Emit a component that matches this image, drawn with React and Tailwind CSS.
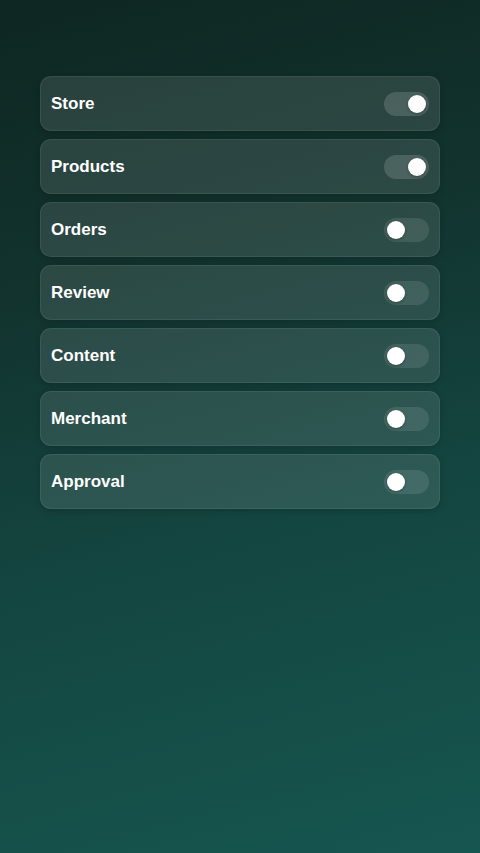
import { useState } from 'react';

const initial = [
  { name: 'Store', on: true },
  { name: 'Products', on: true },
  { name: 'Orders', on: false },
  { name: 'Review', on: false },
  { name: 'Content', on: false },
  { name: 'Merchant', on: false },
  { name: 'Approval', on: false },
];

const Toggle = ({ on, onClick }) => (
  <button
    onClick={onClick}
    className={`flex items-center w-[45px] h-[24px] rounded-full px-[3px] ${
      on ? 'bg-white/15 justify-end' : 'bg-white/10 justify-start'
    }`}
  >
    <span className="block w-[18px] h-[18px] rounded-full bg-white shadow-[0_1px_3px_rgba(0,0,0,0.3)]" />
  </button>
);

const App = () => {
  const [items, setItems] = useState(initial);

  const toggle = (i) => {
    setItems(items.map((it, idx) => (idx === i ? { ...it, on: !it.on } : it)));
  };

  return (
    <div
      className="min-h-[853px] w-full bg-[linear-gradient(165deg,#0e2622_0%,#12332e_30%,#144540_60%,#155049_85%,#165651_100%)] pt-[76px] px-[40px]"
      style={{ fontFamily: '"Liberation Sans", Arial, sans-serif' }}
    >
      <div className="flex flex-col gap-[8px]">
        {items.map((it, i) => (
          <div
            key={it.name}
            className="flex items-center justify-between h-[55px] px-[10px] rounded-[11px] bg-white/[0.11] border border-white/[0.07] shadow-[0_2px_6px_rgba(0,0,0,0.18)]"
          >
            <span className="text-white font-bold text-[17px]">{it.name}</span>
            <Toggle on={it.on} onClick={() => toggle(i)} />
          </div>
        ))}
      </div>
    </div>
  );
};

export default App;
